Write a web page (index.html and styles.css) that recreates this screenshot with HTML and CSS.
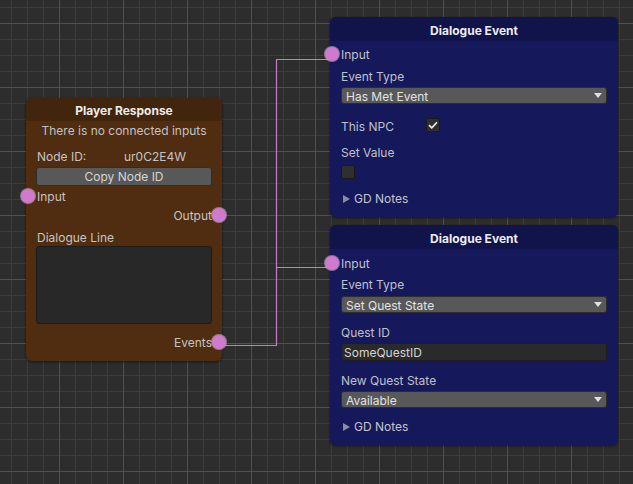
FILE: index.html
```html
<!DOCTYPE html>
<html>
<head>
<meta charset="utf-8">
<link rel="stylesheet" href="styles.css">
</head>
<body>
<div class="canvas">
  <svg class="wires" width="633" height="484" viewBox="0 0 633 484">
    <polyline points="219,345.5 276.5,345.5 276.5,59.5 331,59.5" />
    <polyline points="276.5,267.5 331,267.5" />
  </svg>

  <div class="node node-player">
    <div class="node-head">Player Response</div>
    <div class="node-body">
      <div class="note">There is no connected inputs</div>
      <div class="id-row"><span>Node ID:</span><span>ur0C2E4W</span></div>
      <div class="btn">Copy Node ID</div>
      <div class="port-row port-in r-input"><span class="port"></span>Input</div>
      <div class="port-row port-out r-output">Output<span class="port"></span></div>
      <div class="label r-dline">Dialogue Line</div>
      <div class="textarea"></div>
      <div class="port-row port-out r-events">Events<span class="port"></span></div>
    </div>
  </div>

  <div class="node node-event ev1">
    <div class="node-head">Dialogue Event</div>
    <div class="node-body">
      <div class="port-row port-in e1-input"><span class="port"></span>Input</div>
      <div class="label e1-type">Event Type</div>
      <div class="dropdown e1-dd">Has Met Event<span class="arrow"></span></div>
      <div class="check-row e1-npc"><span class="label">This NPC</span><span class="checkbox checked"><svg width="10" height="8" viewBox="0 0 10 8"><polyline points="1,4.2 3.8,6.8 9,1.2" /></svg></span></div>
      <div class="label e1-set">Set Value</div>
      <div class="checkbox e1-box"></div>
      <div class="foldout e1-gd"><span class="tri"></span>GD Notes</div>
    </div>
  </div>

  <div class="node node-event ev2">
    <div class="node-head">Dialogue Event</div>
    <div class="node-body">
      <div class="port-row port-in e2-input"><span class="port"></span>Input</div>
      <div class="label e2-type">Event Type</div>
      <div class="dropdown e2-dd">Set Quest State<span class="arrow"></span></div>
      <div class="label e2-qid">Quest ID</div>
      <div class="textfield e2-tf">SomeQuestID</div>
      <div class="label e2-state">New Quest State</div>
      <div class="dropdown e2-dd2">Available<span class="arrow"></span></div>
      <div class="foldout e2-gd"><span class="tri"></span>GD Notes</div>
    </div>
  </div>
</div>
</body>
</html>
```

FILE: styles.css
```css
* { box-sizing: border-box; }
html, body { margin: 0; padding: 0; }
body {
  font-family: Inter, "Noto Sans", "Liberation Sans", sans-serif;
  font-size: 12px;
  background: #2d2d2d;
}
.canvas {
  position: relative;
  width: 633px;
  height: 484px;
  overflow: hidden;
  background-color: #2d2d2d;
  background-image:
    linear-gradient(to right, #505050 1px, transparent 1px),
    linear-gradient(to bottom, #505050 1px, transparent 1px),
    linear-gradient(to right, #3c3c3c 1px, transparent 1px),
    linear-gradient(to bottom, #3c3c3c 1px, transparent 1px);
  background-size: 64px 64px, 64px 64px, 16px 16px, 16px 16px;
  background-position: 59px 0, 0 23px, 11px 0, 0 7px;
}
.wires {
  position: absolute;
  left: 0;
  top: 0;
}
.wires polyline {
  fill: none;
  stroke: #c47cc4;
  stroke-width: 1.2;
}

.node {
  position: absolute;
  border-radius: 6px;
  overflow: visible;
  box-shadow: 0 1px 3px rgba(0, 0, 0, 0.55);
  color: #c4c4c4;
}
.node-head {
  text-align: center;
  font-weight: 700;
  color: #ececec;
  border-radius: 6px 6px 0 0;
}
.node-body {
  display: flex;
  flex-direction: column;
  border-radius: 0 0 6px 6px;
}

/* Player Response node */
.node-player {
  left: 26px;
  top: 98px;
  width: 196px;
  height: 263px;
  background: #502c10;
}
.node-player .node-head {
  height: 23px;
  line-height: 23px;
  padding-top: 1px;
  background: #42250d;
}
.node-player .node-body {
  padding: 0 10px 11px 10px;
}
.note {
  height: 18px;
  line-height: 18px;
  padding-top: 1px;
  text-align: center;
  color: #c2c2c2;
}
.id-row {
  margin-top: 8px;
  height: 18px;
  line-height: 18px;
  padding-top: 1px;
  display: grid;
  grid-template-columns: 87px 1fr;
  padding-left: 1px;
}
.btn {
  margin-top: 2px;
  height: 19px;
  line-height: 17px;
  text-align: center;
  background: #585858;
  border: 1px solid #2e2e2e;
  border-radius: 3px;
  color: #d4d4d4;
}
.port-row {
  position: relative;
  height: 16px;
  line-height: 16px;
  padding-top: 1px;
}
.port-in { padding-left: 1px; }
.port-out { text-align: right; }
.port {
  position: absolute;
  top: 1px;
  width: 14px;
  height: 14px;
  border-radius: 50%;
  background: #cf7acf;
  box-shadow: 0 0 0 1px rgba(210, 190, 210, 0.55);
}
.port-in .port { left: -15px; }
.port-out .port { right: -14px; }
.label {
  height: 16px;
  line-height: 16px;
  padding-top: 1px;
  padding-left: 1px;
}
.r-input { margin-top: 2px; }
.r-output { margin-top: 3px; }
.r-dline { margin-top: 6px; }
.textarea {
  margin-top: 1px;
  height: 78px;
  background: #282828;
  border: 1px solid #1c1c1c;
  border-radius: 3px;
}
.r-events { margin-top: 10px; }

/* Dialogue Event nodes */
.node-event {
  left: 330px;
  width: 288px;
  background: #15195b;
  color: #c0c0c8;
}
.node-event .node-head {
  height: 24px;
  line-height: 24px;
  padding-top: 2px;
  background: #10144a;
}
.node-event .node-body {
  padding: 0 11px 11px 11px;
}
.node-event .port-in { padding-left: 0; }
.node-event .port-in .port { left: -16px; }
.node-event .label { padding-left: 0; }
.ev1 { top: 17px; height: 200px; }
.ev2 { top: 225px; height: 220px; }

.dropdown {
  position: relative;
  height: 17px;
  line-height: 15px;
  padding-left: 4px;
  padding-top: 1px;
  background: #585858;
  border: 1px solid #2c2c2c;
  border-radius: 3px;
  color: #e2e2e2;
}
.arrow {
  position: absolute;
  right: 4px;
  top: 5px;
  width: 0;
  height: 0;
  border-left: 4px solid transparent;
  border-right: 4px solid transparent;
  border-top: 5px solid #e0e0e0;
}
.textfield {
  height: 18px;
  line-height: 16px;
  padding-left: 2px;
  padding-top: 1px;
  background: #2a2a2a;
  border: 1px solid #1d1d1d;
  border-radius: 3px;
  color: #d4d4d4;
}
.check-row {
  display: grid;
  grid-template-columns: 85px 14px;
  align-items: center;
  height: 14px;
}
.check-row .label { padding-top: 2px; }
.checkbox {
  width: 14px;
  height: 14px;
  background: #2f2f2f;
  border: 1px solid #1a1a1a;
  border-radius: 2px;
  display: flex;
  align-items: center;
  justify-content: center;
}
.checkbox svg polyline {
  fill: none;
  stroke: #f2f2f2;
  stroke-width: 1.6;
}
.foldout {
  height: 16px;
  line-height: 16px;
  display: flex;
  align-items: center;
  gap: 4px;
  padding-left: 2px;
  padding-top: 1px;
  color: #c4c4cc;
}
.tri {
  width: 0;
  height: 0;
  border-top: 4px solid transparent;
  border-bottom: 4px solid transparent;
  border-left: 7px solid #8c8ca0;
}

.e1-input { margin-top: 5px; }
.e1-type { margin-top: 6px; }
.e1-dd { margin-top: 3px; }
.e1-npc { margin-top: 13px; }
.e1-set { margin-top: 13px; }
.e1-box { margin-top: 5px; }
.e1-gd { margin-top: 11px; }

.e2-input { margin-top: 6px; }
.e2-type { margin-top: 5px; }
.e2-dd { margin-top: 4px; }
.e2-qid { margin-top: 11px; }
.e2-tf { margin-top: 3px; }
.e2-state { margin-top: 11px; }
.e2-dd2 { margin-top: 3px; }
.e2-gd { margin-top: 10px; }
```
